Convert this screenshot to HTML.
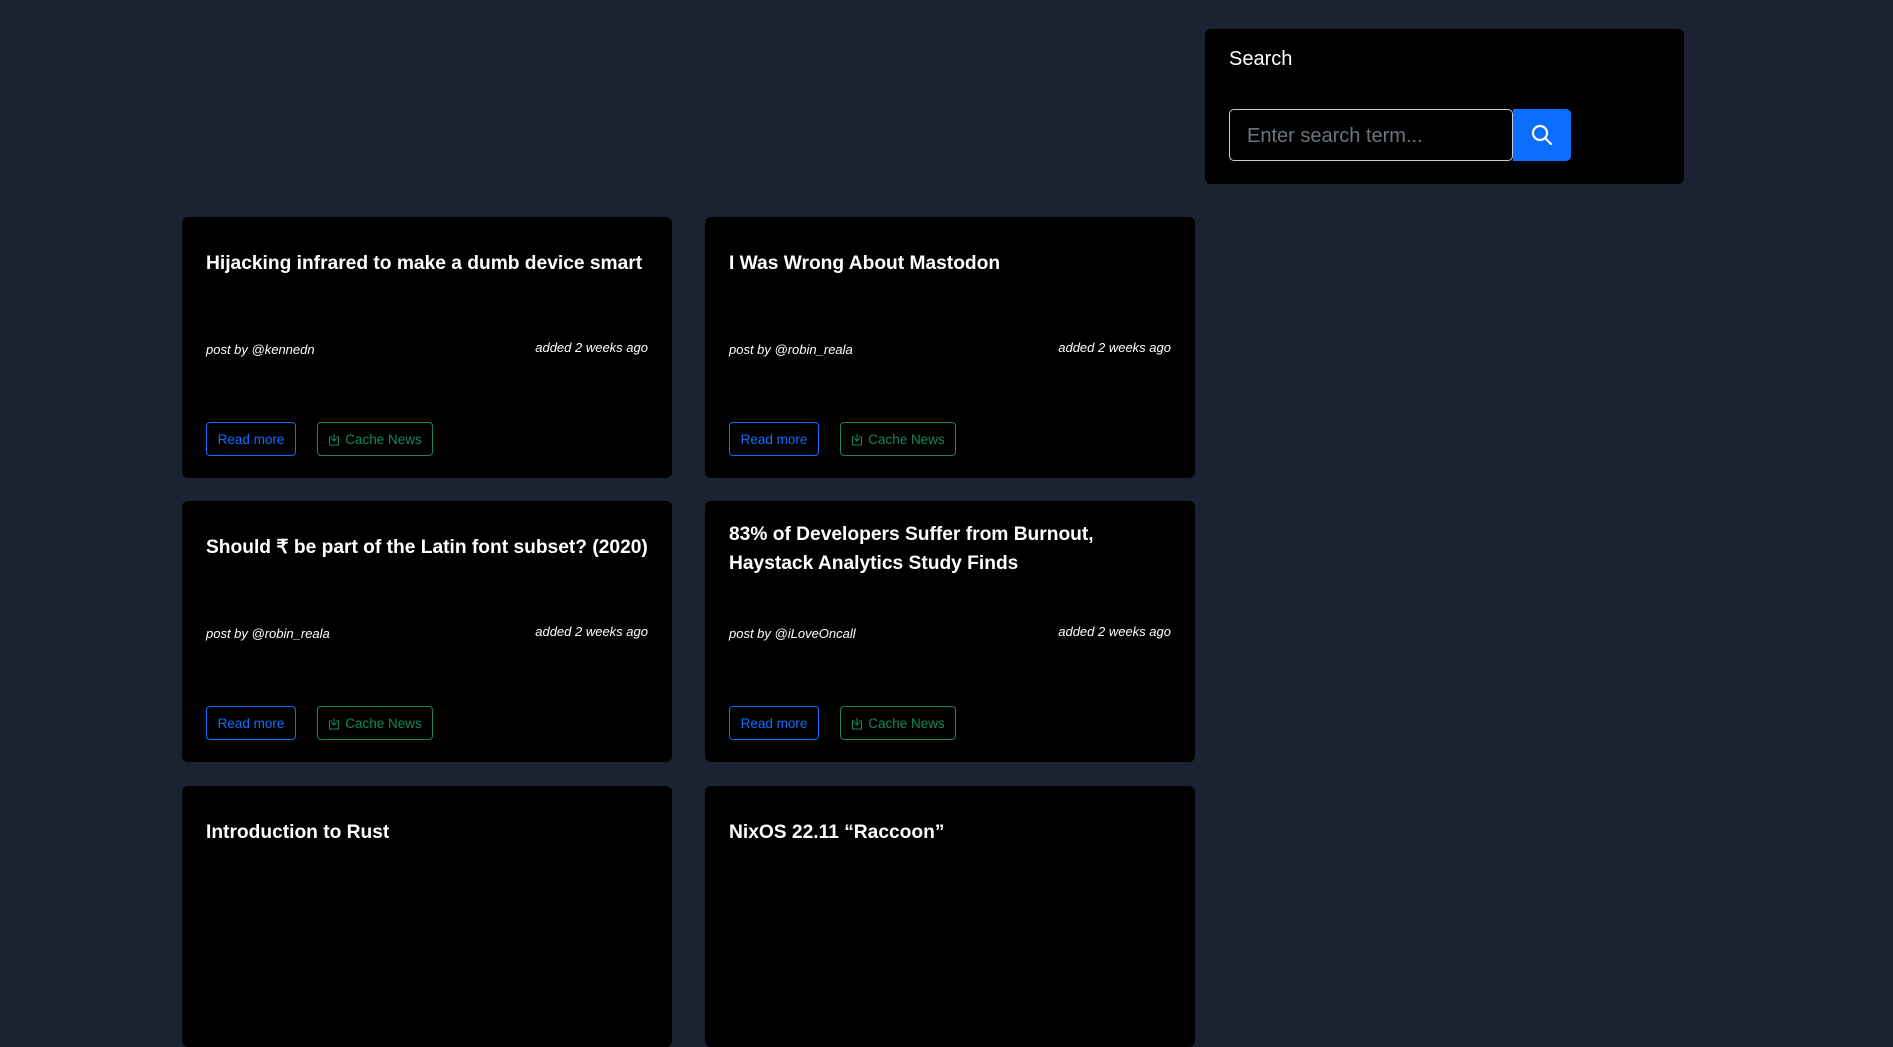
<!DOCTYPE html>
<html><head><meta charset="utf-8"><style>
*{box-sizing:border-box;margin:0;padding:0}
body{width:1893px;height:894px;overflow:hidden;background:#1b2232;font-family:"Liberation Sans",sans-serif;color:#fff;position:relative}
.card{position:absolute;background:#000;border-radius:6px;width:490px;height:261px}
.t{position:absolute;left:24px;top:32px;right:20px;font-weight:bold;font-size:19.2px;line-height:29px}
.p{position:absolute;left:24px;top:125px;font-size:13px;font-style:italic}
.a{position:absolute;right:24px;top:123px;font-size:13px;font-style:italic}
.b{position:absolute;top:205px;height:34px;border:1px solid;border-radius:4px;font-size:13.5px;display:flex;align-items:center;justify-content:center}
.r{left:24px;width:90px;color:#0d6efd;border-color:#0d6efd}
.c{left:135px;width:116px;color:#198754;border-color:#198754}
.c svg{margin-right:5px}
</style></head><body>
<div style="position:absolute;left:1205px;top:29px;width:479px;height:155px;background:#000;border-radius:6px">
<div style="position:absolute;left:24px;top:19px;font-size:20px">Search</div>
<div style="position:absolute;left:24px;top:80px;width:284px;height:52px;border:1px solid #ccc;border-radius:5px;color:#6c757d;font-size:20px;padding:15px 17px 0">Enter search term...</div>
<div style="position:absolute;left:308px;top:80px;width:58px;height:52px;background:#0d6efd;border-radius:0 5px 5px 0;display:flex;align-items:center;justify-content:center">
<svg width="24" height="24" viewBox="0 0 24 24" fill="none" stroke="#fff" stroke-width="2.2"><circle cx="10" cy="10" r="7"/><path d="M15 15l6 6" stroke-linecap="round"/></svg></div>
</div>

<div class="card" style="left:182px;top:217px"><div class="t">Hijacking infrared to make a dumb device smart</div><div class="p">post by @kennedn</div><div class="a">added 2 weeks ago</div><div class="b r">Read more</div><div class="b c"><svg width="12" height="13" viewBox="0 0 12 13" fill="none" stroke="#198754"><path d="M4 4H1.5v8h9V4H8M6 1v7M3.5 5.5L6 8l2.5-2.5"/></svg>Cache News</div></div>
<div class="card" style="left:705px;top:217px"><div class="t">I Was Wrong About Mastodon</div><div class="p">post by @robin_reala</div><div class="a">added 2 weeks ago</div><div class="b r">Read more</div><div class="b c"><svg width="12" height="13" viewBox="0 0 12 13" fill="none" stroke="#198754"><path d="M4 4H1.5v8h9V4H8M6 1v7M3.5 5.5L6 8l2.5-2.5"/></svg>Cache News</div></div>
<div class="card" style="left:182px;top:501px"><div class="t">Should ₹ be part of the Latin font subset? (2020)</div><div class="p">post by @robin_reala</div><div class="a">added 2 weeks ago</div><div class="b r">Read more</div><div class="b c"><svg width="12" height="13" viewBox="0 0 12 13" fill="none" stroke="#198754"><path d="M4 4H1.5v8h9V4H8M6 1v7M3.5 5.5L6 8l2.5-2.5"/></svg>Cache News</div></div>
<div class="card" style="left:705px;top:501px"><div class="t" style="top:19px">83% of Developers Suffer from Burnout,<br>Haystack Analytics Study Finds</div><div class="p">post by @iLoveOncall</div><div class="a">added 2 weeks ago</div><div class="b r">Read more</div><div class="b c"><svg width="12" height="13" viewBox="0 0 12 13" fill="none" stroke="#198754"><path d="M4 4H1.5v8h9V4H8M6 1v7M3.5 5.5L6 8l2.5-2.5"/></svg>Cache News</div></div>
<div class="card" style="left:182px;top:786px"><div class="t">Introduction to Rust</div></div>
<div class="card" style="left:705px;top:786px"><div class="t">NixOS 22.11 “Raccoon”</div></div>
</body></html>
